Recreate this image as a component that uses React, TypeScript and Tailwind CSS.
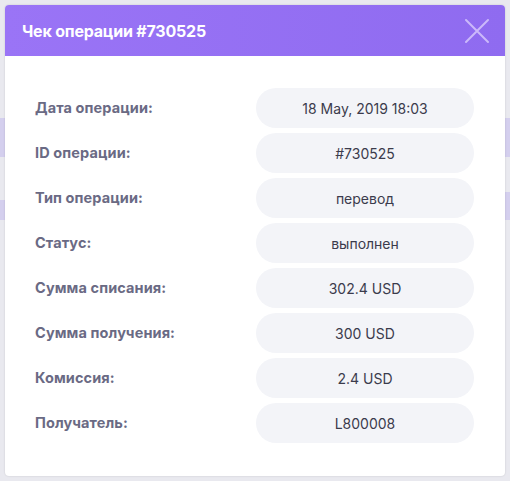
import React from "react";

const rows: [string, string][] = [
  ["Дата операции:", "18 May, 2019 18:03"],
  ["ID операции:", "#730525"],
  ["Тип операции:", "перевод"],
  ["Статус:", "выполнен"],
  ["Сумма списания:", "302.4 USD"],
  ["Сумма получения:", "300 USD"],
  ["Комиссия:", "2.4 USD"],
  ["Получатель:", "L800008"],
];

export default function App() {
  return (
    <div
      className="relative w-[510px] h-[481px] overflow-hidden bg-[#e9e9ef]"
      style={{ fontFamily: "Inter, 'Noto Sans', sans-serif" }}
    >
      {/* faint background page content */}
      <div className="absolute left-0 top-[118px] w-[5px] h-[39px] bg-[#d4cfee]" />
      <div className="absolute left-0 top-[200px] w-[5px] h-[20px] bg-[#d4cfee]" />
      <div className="absolute right-0 top-[118px] w-[5px] h-[39px] bg-[#d4cfee]" />
      <div className="absolute right-0 top-[192px] w-[5px] h-[28px] bg-[#d4cfee]" />

      <div className="absolute left-[5px] top-[5px] w-[500px] h-[471px] rounded-[4px] bg-white overflow-hidden shadow-[0_0_2px_rgba(0,0,0,0.15)] flex flex-col">
        <div className="h-[51px] shrink-0 bg-gradient-to-r from-[#9a74f6] to-[#8f6bf0] flex items-center justify-between pl-[17px] pr-[15px]">
          <span className="text-white font-bold text-[16px] tracking-[-0.2px]">
            Чек операции #730525
          </span>
          <svg width="26" height="26" viewBox="0 0 26 26" className="mt-[1px]">
            <path
              d="M2 2 L24 24 M24 2 L2 24"
              stroke="#cbb9fa"
              strokeWidth="2"
              strokeLinecap="round"
            />
          </svg>
        </div>
        <div className="flex flex-col gap-[5px] pt-[32px] pl-[30px] pr-[31px]">
          {rows.map(([label, value]) => (
            <div key={label} className="flex items-center justify-between h-[40px]">
              <span className="text-[14.5px] font-bold text-[#6a6a84] tracking-[0.1px]">{label}</span>
              <div className="w-[218px] h-[40px] rounded-full bg-[#f3f4f8] flex items-center justify-center text-[14px] font-normal text-[#3b3b4c]">
                {value}
              </div>
            </div>
          ))}
        </div>
      </div>
    </div>
  );
}
